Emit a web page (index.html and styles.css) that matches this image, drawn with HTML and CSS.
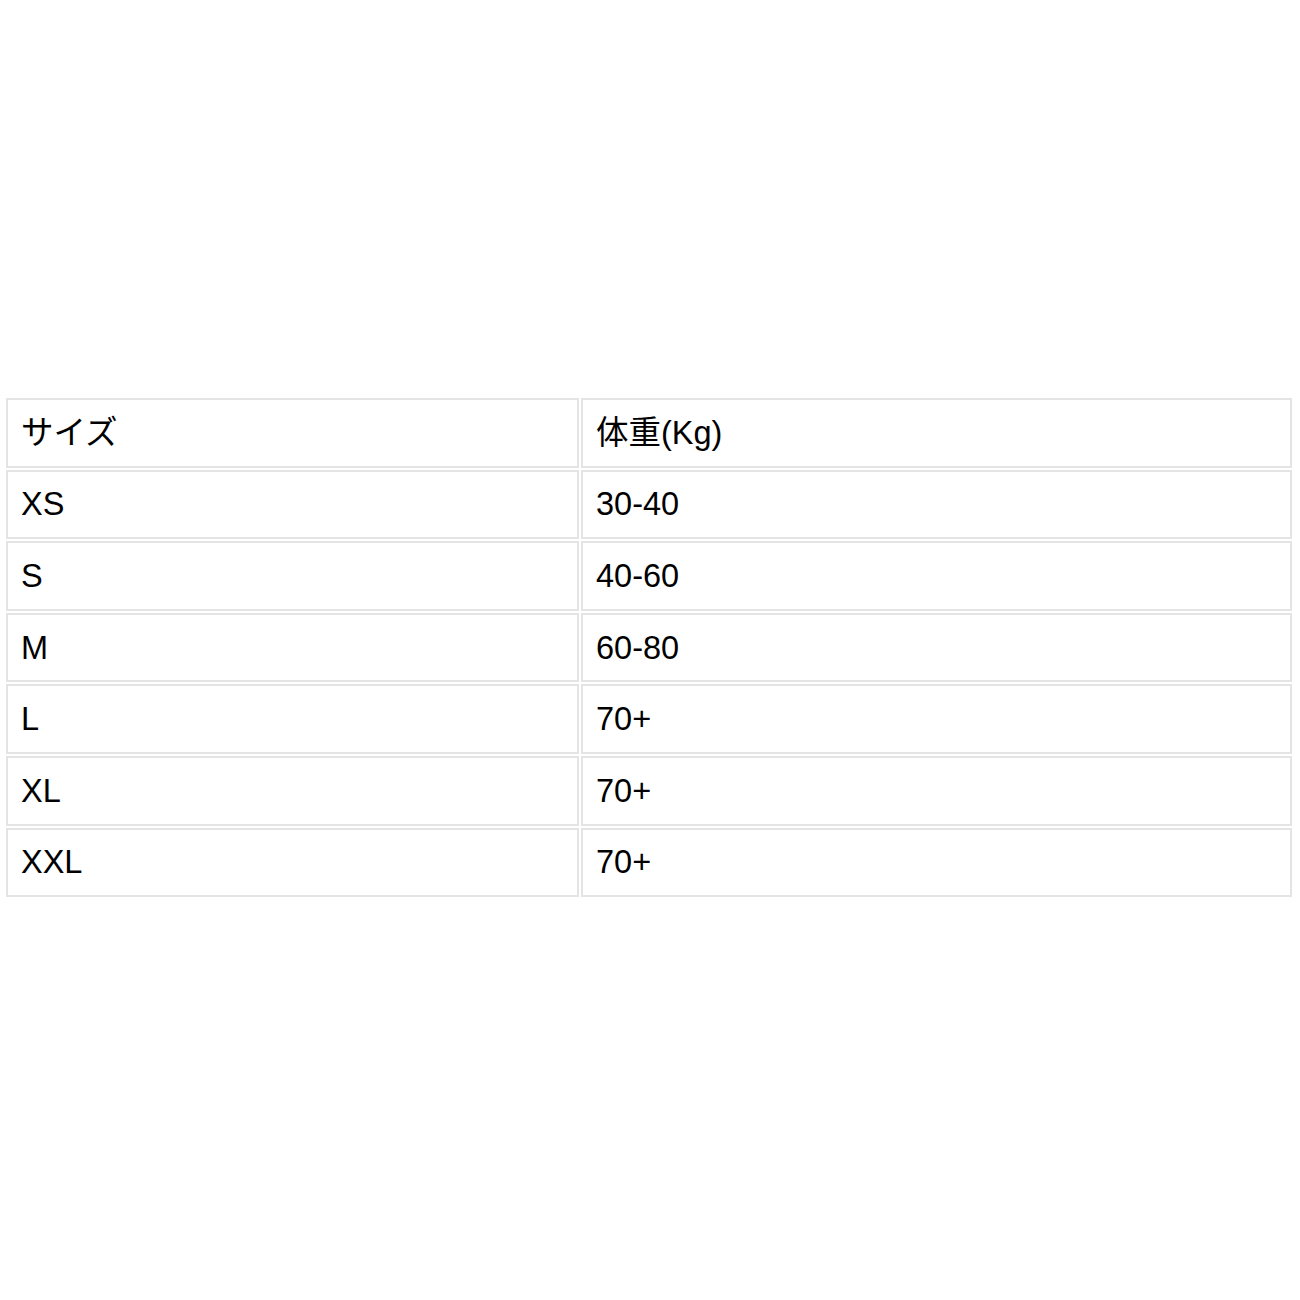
FILE: index.html
```html
<!DOCTYPE html>
<html lang="ja">
<head>
<meta charset="utf-8">
<title>サイズ表</title>
<link rel="stylesheet" href="styles.css">
</head>
<body>
<main class="page">
  <table class="size-table">
    <tbody>
      <tr><td class="col-size">サイズ</td><td>体重(Kg)</td></tr>
      <tr><td class="col-size">XS</td><td>30-40</td></tr>
      <tr><td class="col-size">S</td><td>40-60</td></tr>
      <tr><td class="col-size">M</td><td>60-80</td></tr>
      <tr><td class="col-size">L</td><td>70+</td></tr>
      <tr><td class="col-size">XL</td><td>70+</td></tr>
      <tr><td class="col-size">XXL</td><td>70+</td></tr>
    </tbody>
  </table>
</main>
</body>
</html>
```

FILE: styles.css
```css
html, body {
  margin: 0;
  padding: 0;
  background: #ffffff;
}

.page {
  padding: 396px 0 0 4px;
}

.size-table {
  width: 1290px;
  border-collapse: separate;
  border-spacing: 2px;
  table-layout: fixed;
  font-family: "Liberation Sans", Arial, "Noto Sans CJK JP", sans-serif;
  font-size: 32.5px;
  line-height: 36px;
  color: #000000;
}

.size-table td {
  box-sizing: border-box;
  height: 69.6px;
  padding: 0 13px;
  border: 2px solid #e4e4e4;
  vertical-align: middle;
  text-align: left;
  font-weight: normal;
}

.size-table .col-size {
  width: 573px;
}
```
